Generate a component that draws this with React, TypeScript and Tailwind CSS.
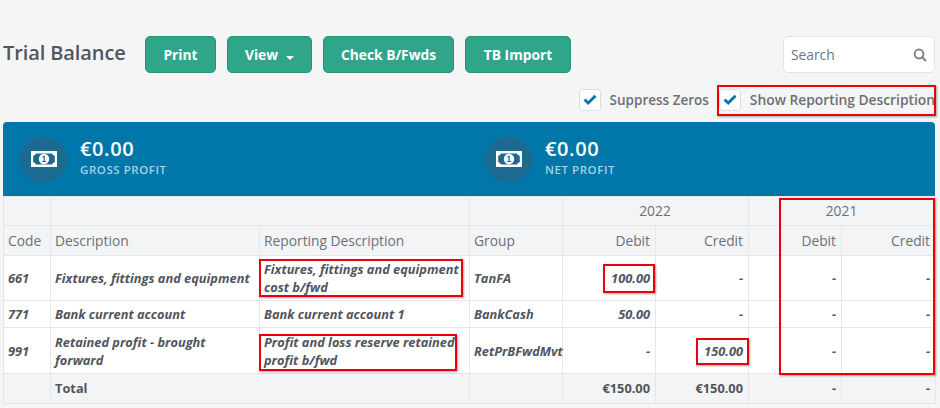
import React from "react";

const font = "font-['Open_Sans',sans-serif]";

function Btn({ children, w }: { children: React.ReactNode; w: string }) {
  return (
    <button className={`${w} h-[37px] pt-[1px] rounded-[5px] bg-[#2fa58a] border border-[#28917a] text-white text-[13.8px] font-bold flex items-center justify-center`}>
      {children}
    </button>
  );
}

function Check() {
  return (
    <span className="w-[22px] h-[22px] bg-white border border-[#dcdfe3] rounded-[3px] flex items-center justify-center">
      <svg width="14" height="11" viewBox="0 0 14 11">
        <path d="M1.5 5.5 L5.2 9 L12.5 1.8" fill="none" stroke="#0077a8" strokeWidth="2.8" />
      </svg>
    </span>
  );
}

function Money() {
  return (
    <svg width="26" height="16" viewBox="0 0 26 16">
      <path fillRule="evenodd" fill="#fff" d="M0 0H26V16H0Z M5 2.5C4.5 3.8 3.5 4.5 2.2 4.8V11.2C3.5 11.5 4.5 12.2 5 13.5H21C21.5 12.2 22.5 11.5 23.8 11.2V4.8C22.5 4.5 21.5 3.8 21 2.5Z" />
      <circle cx="13" cy="8" r="5.2" fill="#fff" />
      <path fill="#1c6a8f" d="M11.2 11H15V10H13.8V4.8H12.8L11.2 5.8V6.8L12.6 6V10H11.2Z" />
    </svg>
  );
}

function Stat({ w, value, label }: { w: string; value: string; label: string }) {
  return (
    <div className={`${w} flex items-center`}>
      <span className="w-[47px] h-[47px] rounded-full bg-[#1c6a8f] flex items-center justify-center">
        <Money />
      </span>
      <div className="ml-[13px] -mt-[5px]">
        <div className="text-[20px] leading-[26px] font-semibold text-white tracking-[0.6px]">{value}</div>
        <div className="text-[11.5px] leading-[16px] font-semibold text-[#a5d3e6] tracking-[0.55px]">{label}</div>
      </div>
    </div>
  );
}

const th = "border border-[#e4e6e9] font-normal text-[13.8px] text-[#6b7076] pl-[4px] pr-[5px]";
const td = "border border-[#e4e6e9] pl-[4px] pr-[5px] text-[12.8px] leading-[18px] font-bold italic text-[#50555e] bg-white";
const tf = "border border-[#e4e6e9] pl-[4px] pr-[5px] text-[12.8px] font-bold text-[#50555e]";

const rows = [
  { h: "h-[45px]", code: "661", d: "Fixtures, fittings and equipment", r: "Fixtures, fittings and equipment cost b/fwd", g: "TanFA", a: "100.00", b: "-" },
  { h: "h-[27px]", code: "771", d: "Bank current account", r: "Bank current account 1", g: "BankCash", a: "50.00", b: "-" },
  { h: "h-[46px]", code: "991", d: "Retained profit - brought forward", r: "Profit and loss reserve retained profit b/fwd", g: "RetPrBFwdMvt", a: "-", b: "150.00" },
];

function Mark({ c }: { c: string }) {
  return <div className={`absolute border-[2px] border-[#e8000d] shadow-[1px_1px_2px_rgba(0,0,0,0.35)] pointer-events-none ${c}`} />;
}

export default function App() {
  return (
    <div className={`${font} relative w-[940px] h-[408px] overflow-hidden bg-[#f5f5f5] pl-[3px] pr-[5px] pt-[36px]`}>
      <div className="flex items-start">
        <h1 className="w-[142px] text-[20px] leading-[34px] font-semibold text-[#50555f] tracking-[-0.1px] whitespace-nowrap">Trial Balance</h1>
        <div className="flex gap-[11px]">
          <Btn w="w-[71px]">Print</Btn>
          <Btn w="w-[85px]">
            View
            <span className="ml-[8px] mt-[6px] border-x-[4px] border-t-[4px] border-x-transparent border-t-white" />
          </Btn>
          <Btn w="w-[131px]">Check B/Fwds</Btn>
          <Btn w="w-[106px]">TB Import</Btn>
        </div>
        <div className="ml-auto w-[152px] h-[37px] pt-[1px] bg-white border border-[#e2e4e7] rounded-[5px] flex items-center justify-between pl-[7px] pr-[7px]">
          <span className="text-[13.8px] text-[#70757b]">Search</span>
          <svg width="14" height="14" viewBox="0 0 14 14">
            <circle cx="6" cy="6" r="4.4" fill="none" stroke="#80858a" strokeWidth="2" />
            <path d="M9.2 9.2 L13 13" stroke="#80858a" strokeWidth="2.2" />
          </svg>
        </div>
      </div>

      <div className="flex justify-end items-center mt-[15px] h-[23px] text-[13.8px] font-semibold text-[#6b7076] whitespace-nowrap">
        <Check />
        <span className="ml-[9px] mr-[10px] text-[13.5px] pt-[1px]">Suppress Zeros</span>
        <Check />
        <span className="ml-[9px] pt-[1px]">Show Reporting Description</span>
      </div>

      <div className="mt-[11px] h-[74px] bg-[#0077a8] rounded-t-[4px] flex items-center pl-[17px]">
        <Stat w="w-[465px]" value="€0.00" label="GROSS PROFIT" />
        <Stat w="w-[400px]" value="€0.00" label="NET PROFIT" />
      </div>

      <table className="w-[932px] table-fixed border-collapse bg-[#f3f4f6]">
        <colgroup>
          <col className="w-[47px]" />
          <col className="w-[209px]" />
          <col className="w-[210px]" />
          <col className="w-[93px]" />
          <col className="w-[93px]" />
          <col className="w-[93px]" />
          <col className="w-[93px]" />
          <col className="w-[94px]" />
        </colgroup>
        <thead>
          <tr className="h-[29px]">
            <th className={th} />
            <th className={th} colSpan={2} />
            <th className={th} />
            <th className={th} colSpan={2}>2022</th>
            <th className={th} colSpan={2}>2021</th>
          </tr>
          <tr className="h-[30px]">
            <th className={`${th} text-left pt-[1px]`}>Code</th>
            <th className={`${th} text-left pt-[1px]`}>Description</th>
            <th className={`${th} text-left pt-[1px]`}>Reporting Description</th>
            <th className={`${th} text-left pt-[1px]`}>Group</th>
            <th className={`${th} text-right pt-[1px]`}>Debit</th>
            <th className={`${th} text-right pt-[1px]`}>Credit</th>
            <th className={`${th} text-right pt-[1px]`}>Debit</th>
            <th className={`${th} text-right pt-[1px]`}>Credit</th>
          </tr>
        </thead>
        <tbody>
          {rows.map((r) => (
            <tr key={r.code} className={r.h}>
              <td className={td}>{r.code}</td>
              <td className={td}>{r.d}</td>
              <td className={td}>{r.r}</td>
              <td className={`${td} whitespace-nowrap`}>{r.g}</td>
              <td className={`${td} text-right`}>{r.a}</td>
              <td className={`${td} text-right`}>{r.b}</td>
              <td className={`${td} text-right`}>-</td>
              <td className={`${td} text-right`}>-</td>
            </tr>
          ))}
          <tr className="h-[30px]">
            <td className={tf} />
            <td className={tf} colSpan={2}>Total</td>
            <td className={tf} />
            <td className={`${tf} text-right`}>€150.00</td>
            <td className={`${tf} text-right`}>€150.00</td>
            <td className={`${tf} text-right`}>-</td>
            <td className={`${tf} text-right`}>-</td>
          </tr>
        </tbody>
      </table>

      <Mark c="left-[717px] top-[85px] w-[219px] h-[31px]" />
      <Mark c="left-[259px] top-[259px] w-[204px] h-[38px]" />
      <Mark c="left-[259px] top-[334px] w-[198px] h-[37px]" />
      <Mark c="left-[603px] top-[264px] w-[52px] h-[29px]" />
      <Mark c="left-[696px] top-[338px] w-[53px] h-[27px]" />
      <Mark c="left-[779px] top-[198px] w-[156px] h-[177px]" />
    </div>
  );
}
